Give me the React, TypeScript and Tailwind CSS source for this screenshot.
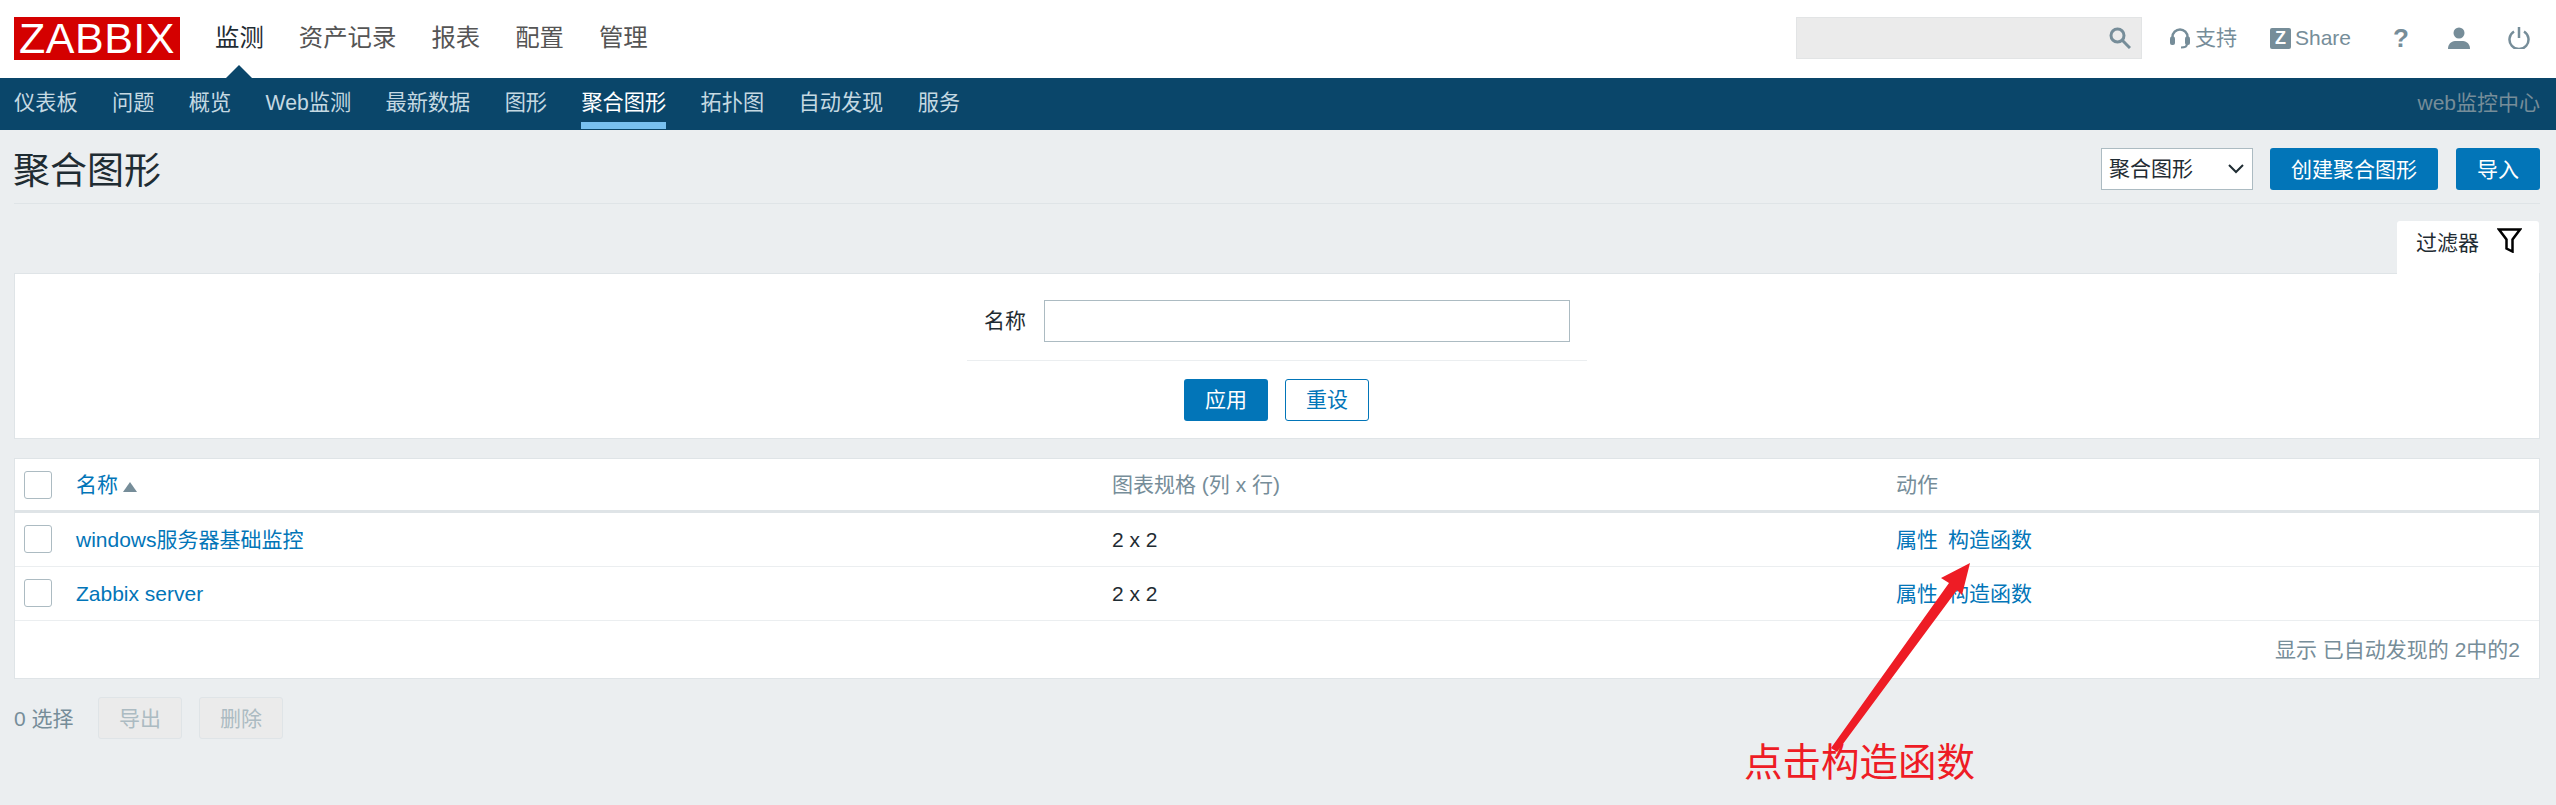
import React from 'react';

const mainMenu = ['监测', '资产记录', '报表', '配置', '管理'];
const subMenu = ['仪表板', '问题', '概览', 'Web监测', '最新数据', '图形', '聚合图形', '拓扑图', '自动发现', '服务'];
const rows = ['windows服务器基础监控', 'Zabbix server'];

const Checkbox = () => (
  <div className="w-[28px] h-[28px] bg-white border border-[#acbbc2] rounded-[3px]"></div>
);

const App = () => {
  return (
    <div
      className="relative min-h-screen bg-[#ebeef0] text-[21px] text-[#1f2c33] overflow-hidden"
      style={{ fontFamily: '"Liberation Sans", "Noto Sans CJK SC", sans-serif' }}
    >
      {/* Top bar */}
      <div className="h-[78px] bg-white flex items-start pl-[14px] pr-[16px]">
        <div className="mt-[17px] w-[166px] h-[43px] bg-[#d40000] text-white text-[43px] leading-[43px] text-center tracking-[0.5px]">
          ZABBIX
        </div>
        <nav className="flex gap-[35px] ml-[35px] mt-[17px] text-[24.4px] leading-[42px] text-[#555]">
          {mainMenu.map((item, index) => (
            <span key={item} className={index === 0 ? 'relative text-[#1f2c33]' : ''}>
              {item}
              {index === 0 && (
                <span className="absolute left-[11px] top-[48px] w-0 h-0 border-l-[13.500px] border-r-[13.500px] border-b-[13px] border-l-transparent border-r-transparent border-b-[#0a466a]"></span>
              )}
            </span>
          ))}
        </nav>
        <div className="ml-auto mr-[10px] mt-[17px] flex items-center text-[#768d99]">
          <div className="w-[346px] h-[42px] bg-[#ebebeb] border border-[#e2e4e5] flex items-center justify-end pr-[10px]">
            <svg width="22" height="22" viewBox="0 0 22 22" fill="none" stroke="#768d99" strokeWidth="3">
              <circle cx="8.500" cy="8.500" r="6.500" />
              <path d="M13.500 13.500L21 21" />
            </svg>
          </div>
          <svg className="ml-[28px]" width="20" height="22" viewBox="0 0 20 22" fill="none" stroke="#768d99" strokeWidth="2.500">
            <path d="M2.500 13V10a7.500 7.500 0 0 1 15 0v3" />
            <rect x="0" y="9.500" width="5" height="8.500" rx="2" fill="#768d99" stroke="none" />
            <rect x="15" y="9.500" width="5" height="8.500" rx="2" fill="#768d99" stroke="none" />
            <path d="M17 17c0 2.500-2 3.500-6 3.500" strokeWidth="2" />
          </svg>
          <span className="ml-[5px] w-[43px]">支持</span>
          <span className="ml-[32px] w-[21px] h-[21px] bg-[#768d99] rounded-[2px] text-white text-[18px] leading-[21px] font-bold text-center">Z</span>
          <span className="ml-[4px] w-[56px]">Share</span>
          <span className="ml-[42px] w-[14px] text-[26px] leading-[26px] font-bold text-center">?</span>
          <svg className="ml-[41px]" width="22" height="22" viewBox="0 0 22 22" fill="#768d99">
            <circle cx="11" cy="6" r="5.500" />
            <path d="M0 22c0-5 3-7.500 7-8h8c4 .5 7 3 7 8z" />
          </svg>
          <svg className="ml-[38px]" width="22" height="22" viewBox="0 0 22 22" fill="none" stroke="#768d99" strokeWidth="2.500">
            <path d="M6 4.500a9.500 9.500 0 1 0 10 0" />
            <path d="M11 0v11" />
          </svg>
        </div>
      </div>

      {/* Sub menu */}
      <div className="h-[52px] bg-[#0a466a] flex items-start pl-[14px] pr-[16px]">
        <nav className="flex gap-[34.400px] text-[21.2px] text-[#c5d9e2]">
          {subMenu.map((item, index) => (
            <span
              key={item}
              className={`h-[51px] pt-[9px] leading-[32px] ${index === 6 ? 'text-white border-b-[7px] border-[#78c1f0]' : ''}`}
            >
              {item}
            </span>
          ))}
        </nav>
        <span className="ml-auto pt-[9px] leading-[32px] text-[#768d99]">web监控中心</span>
      </div>

      <main className="pl-[14px] pr-[16px]">
        {/* Title */}
        <div className="h-[74px] border-b border-[#dfe4e7] flex items-start justify-between pt-[18px]">
          <h1 className="-ml-[1px] pt-[2px] text-[37px] leading-[44px]">聚合图形</h1>
          <div className="flex items-center">
            <div className="w-[152px] h-[42px] bg-white border border-[#acbbc2] flex items-center justify-between pl-[7px] pr-[8px]">
              <span>聚合图形</span>
              <svg width="16" height="10" viewBox="0 0 16 10" fill="none" stroke="#1f2c33" strokeWidth="2">
                <path d="M1 1l7 7 7-7" />
              </svg>
            </div>
            <button className="ml-[17px] w-[168px] h-[42px] pt-[1px] bg-[#0275b8] text-white rounded-[3px]">创建聚合图形</button>
            <button className="ml-[18px] w-[84px] h-[42px] pt-[1px] bg-[#0275b8] text-white rounded-[3px]">导入</button>
          </div>
        </div>

        {/* Filter tab */}
        <div className="mt-[17px] flex justify-end">
          <div className="w-[142px] h-[53px] mr-[1px] -mb-[1px] bg-white rounded-t-[3px] flex items-start gap-[18px] pl-[19px] pt-[6px]">
            <span className="leading-[32px]">过滤器</span>
            <svg className="mt-[1px]" width="25" height="25" viewBox="0 0 25 25" fill="none" stroke="#000" strokeWidth="2.500">
              <path d="M2 1.500h21l-7.500 10v12l-6-3v-9z" />
            </svg>
          </div>
        </div>

        {/* Filter panel */}
        <div className="h-[166px] bg-white border border-[#dfe4e7] pt-[26px]">
          <div className="w-[620px] mx-auto">
            <div className="flex items-center justify-end gap-[18px] pr-[17px] pb-[18px] border-b border-[#ebeef0]">
              <span>名称</span>
              <input className="w-[526px] h-[42px] bg-white border border-[#acbbc2]" />
            </div>
            <div className="flex justify-center gap-[17px] pt-[18px] pr-[1px]">
              <button className="w-[84px] h-[42px] bg-[#0275b8] text-white rounded-[3px]">应用</button>
              <button className="w-[84px] h-[42px] bg-white text-[#0275b8] border border-[#0275b8] rounded-[3px]">重设</button>
            </div>
          </div>
        </div>

        {/* List */}
        <div className="mt-[19px] h-[221px] bg-white border border-[#dfe4e7]">
          <div className="h-[54px] grid grid-cols-[61px_1036px_784px_1fr] items-center border-b-[3px] border-[#dfe4e7]">
            <div className="pl-[9px]"><Checkbox /></div>
            <div className="flex items-center gap-[5px] pt-[1px] text-[#0275b8]">
              名称
              <span className="mt-[3px] w-0 h-0 border-l-[7px] border-r-[7px] border-b-[10px] border-l-transparent border-r-transparent border-b-[#768d99]"></span>
            </div>
            <div className="pt-[1px] text-[#768d99]">图表规格 (列 x 行)</div>
            <div className="pt-[1px] text-[#768d99]">动作</div>
          </div>
          {rows.map((name) => (
            <div key={name} className="h-[54px] grid grid-cols-[61px_1036px_784px_1fr] items-center border-b border-[#ebeef0]">
              <div className="pl-[9px] -mt-[2px]"><Checkbox /></div>
              <div className="text-[#0275b8]">{name}</div>
              <div>2 x 2</div>
              <div className="flex gap-[10px] text-[#0275b8]">
                <span>属性</span>
                <span>构造函数</span>
              </div>
            </div>
          ))}
          <div className="h-[57px] flex items-center justify-end pr-[19px] text-[#768d99]">显示 已自动发现的 2中的2</div>
        </div>

        {/* Bottom actions */}
        <div className="mt-[18px] flex items-center text-[#768d99]">
          <span className="w-[84px] pt-[1px]">0 选择</span>
          <button className="w-[84px] h-[42px] pt-[1px] bg-[#ebebeb] text-[#acbbc2] border border-[#dfe4e7] rounded-[3px]">导出</button>
          <button className="ml-[17px] w-[84px] h-[42px] pt-[1px] bg-[#ebebeb] text-[#acbbc2] border border-[#dfe4e7] rounded-[3px]">删除</button>
        </div>
      </main>

      {/* Annotation */}
      <svg className="absolute left-[1820px] top-[555px]" width="160" height="200" viewBox="1820 555 160 200">
        <path d="M1970 563L1941 578L1949 583L1831 748L1837 752L1957 590L1962 595Z" fill="#ee1c25" />
      </svg>
      <span className="absolute left-[1744px] top-[736px] text-[38.500px] leading-[54px] text-[#ee1c25]">点击构造函数</span>
    </div>
  );
};

export default App;
